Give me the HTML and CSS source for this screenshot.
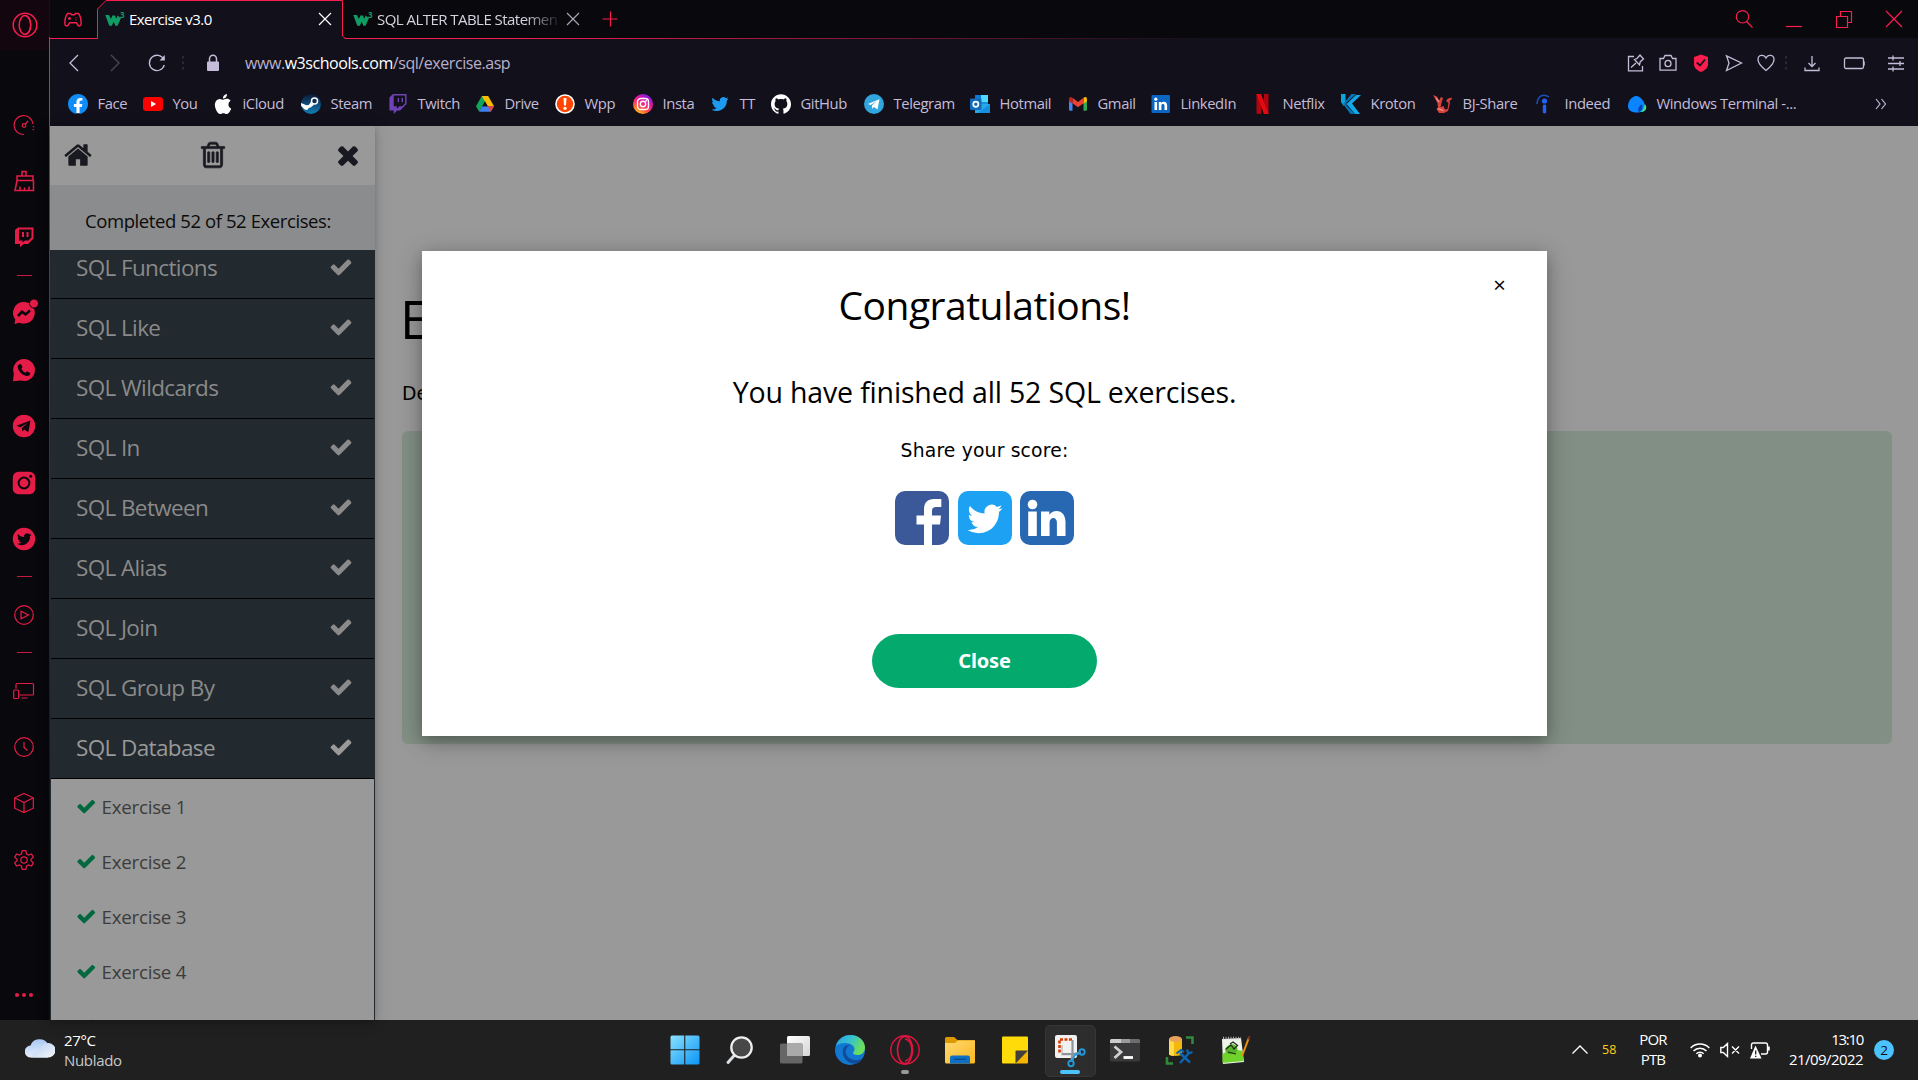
FILE: index.html
```html
<!DOCTYPE html>
<html lang="pt-BR">
<head>
<meta charset="utf-8">
<title>Exercise v3.0</title>
<link rel="stylesheet" href="styles.css">
</head>
<body>
<svg class="defs" aria-hidden="true">
  <symbol id="check" viewBox="0 0 1792 1792"><path d="M1671 566q0 40-28 68l-724 724-136 136q-28 28-68 28t-68-28l-136-136-362-362q-28-28-28-68t28-68l136-136q28-28 68-28t68 28l294 295 656-657q28-28 68-28t68 28l136 136q28 28 28 68z"/></symbol>
  <symbol id="bird" viewBox="0 0 24 24"><path d="M23.953 4.57a10 10 0 01-2.825.775 4.958 4.958 0 002.163-2.723c-.951.555-2.005.959-3.127 1.184a4.92 4.92 0 00-8.384 4.482C7.69 8.095 4.067 6.13 1.64 3.162a4.822 4.822 0 00-.666 2.475c0 1.71.87 3.213 2.188 4.096a4.904 4.904 0 01-2.228-.616v.06a4.923 4.923 0 003.946 4.827 4.996 4.996 0 01-2.212.085 4.936 4.936 0 004.604 3.417 9.867 9.867 0 01-6.102 2.105c-.39 0-.779-.023-1.17-.067a13.995 13.995 0 007.557 2.209c9.053 0 13.998-7.496 13.998-13.985 0-.21 0-.42-.015-.63A9.935 9.935 0 0024 4.59z"/></symbol>
  <symbol id="w3" viewBox="0 0 20 20"><path d="M.3 4.500h4.200l2 4.500 1.700-4h3l1.200 3.500 1.700-3.500 2.500 2.200 1.600-.4-4.200 9.600h-2.400l-2-4.500-2 4.500H4.800z" fill="#0f9d63"/></symbol>
  <symbol id="twitch" viewBox="0 0 24 24"><path d="M11.571 4.714h1.715v5.143H11.57zm4.715 0H18v5.143h-1.714zM6 0L1.714 4.286v15.428h5.143V24l4.286-4.286h3.428L22.286 12V0zm14.571 11.143l-3.428 3.428h-3.429l-3 3v-3H6.857V1.714h13.714Z"/></symbol>
  <symbol id="x" viewBox="0 0 14 14"><path d="M1 1l12 12M13 1L1 13" fill="none" stroke="currentColor" stroke-width="1.200"/></symbol>
</svg>

<div class="desktop">
<aside class="gxbar">
  <div class="gx-logo"><svg width="26" height="26" viewBox="0 0 26 26"><g fill="none" stroke="#fa1e4e"><circle cx="13" cy="13" r="11.800" stroke-width="1.500"/><ellipse cx="13" cy="13" rx="5.800" ry="9.500" stroke-width="1.500"/><path d="M11.500 22.500c9.500 1 9.500-20 0-19" stroke-width="1.300"/></g></svg></div>
  <div class="gx-item"><svg class="ln" viewBox="0 0 24 24"><path d="M12 21.500A9.500 9.500 0 1 1 21 11M21.500 13v1.200M21.200 16v1.200"/><circle cx="12" cy="12.500" r="1.800"/><path d="M13.500 11l2.500-3"/></svg></div>
  <div class="gx-item"><svg class="ln" viewBox="0 0 24 24"><path d="M10 7V2.500h4V7M5 7h16v4.500H5zM5 11.500L3 21.500h18.500v-10M8 21.500v-4M12.500 21.500v-3M17 21.500v-4" stroke-width="1.500"/></svg></div>
  <div class="gx-item"><svg class="fl" viewBox="0 0 24 24"><path fill-rule="evenodd" d="M3 5l3-2.500h15.500v11L16 19h-4l-4 3v-3H3zM7 4.500v11h3.500v2l2.500-2h3.500l3-3v-8zM10 7h2v5h-2zM14.500 7h2v5h-2z"/></svg></div>
  <i class="gx-sep"></i>
  <div class="gx-item"><svg class="fl" viewBox="0 0 24 24"><path d="M12 1a11 10.800 0 1 1-4.600 20.700L2.500 23l.8-4.600A10.800 10.800 0 0 1 12 1z"/><path d="M6 15l4-4.200 3.500 2.600L18 9.500" fill="none" stroke="#09080d" stroke-width="2.600"/><circle cx="22" cy="2.500" r="4.500" stroke="#09080d" stroke-width="1"/></svg></div>
  <div class="gx-item"><svg class="fl" viewBox="0 0 24 24"><path d="M12 1a11 11 0 1 1-3 21.600L1 23.200l.8-7.500A11 11 0 0 1 12 1z"/><path d="M7 6.500l2-.6 1.500 3.400-1.200 1.500c1 2 2.400 3.200 4.200 4l1.500-1.500 3.200 1.700c.2 2-1.700 3.300-3.600 2.900-4.300-.8-8-4.600-8.800-8.500-.2-1.200.2-2.300 1.200-2.900z" fill="#09080d"/></svg></div>
  <div class="gx-item"><svg class="fl" viewBox="0 0 24 24"><circle cx="12" cy="12" r="11.200"/><path d="M4.500 11.800L18.500 6.500l-2.200 11.800-4-2.800-2 1.900-.3-3.400 5.500-5-7 4.300z" fill="#09080d"/></svg></div>
  <div class="gx-item"><svg class="fl" viewBox="0 0 24 24"><rect x=".8" y=".8" width="22.400" height="22.400" rx="5.500"/><circle cx="12" cy="12" r="5.400" fill="none" stroke="#09080d" stroke-width="2"/><circle cx="18.700" cy="5.300" r="1.500" fill="#09080d"/></svg></div>
  <div class="gx-item"><svg class="fl" viewBox="0 0 24 24"><circle cx="12" cy="12" r="11.200"/><g fill="#09080d"><use href="#bird" x="5" y="5" width="14.500" height="14.500"/></g></svg></div>
  <i class="gx-sep"></i>
  <div class="gx-item"><svg class="ln" viewBox="0 0 24 24"><circle cx="12" cy="12" r="9.300"/><path d="M9 8.200v7.600l7.500-3.800z"/></svg></div>
  <i class="gx-sep"></i>
  <div class="gx-item"><svg class="ln" viewBox="0 0 24 24"><path d="M4 9.500V5.500q0-1 1-1h15.500q1 0 1 1V15q0 1-1 1H7.500M9.500 19h6"/><rect x="1.700" y="11" width="5" height="8.500" rx="1"/></svg></div>
  <div class="gx-item"><svg class="ln" viewBox="0 0 24 24"><circle cx="12" cy="12" r="9.300"/><path d="M12 7v5.500l3.500 3"/></svg></div>
  <div class="gx-item"><svg class="ln" viewBox="0 0 24 24"><path d="M12 2.500l9.300 4.300v10.400L12 21.500l-9.300-4.300V6.800zM2.700 6.800L12 11.500l9.300-4.700M12 11.500v10"/></svg></div>
  <div class="gx-item"><svg class="ln" viewBox="0 0 24 24"><circle cx="12" cy="12" r="3.200"/><path d="M10.200 2.700h3.600l.7 3.100 2 1.200 3-1 1.800 3.200-2.300 2v1.600l2.300 2-1.800 3.200-3-1-2 1.200-.7 3.100h-3.600l-.7-3.100-2-1.200-3 1-1.800-3.200 2.300-2v-1.600l-2.300-2L4.500 6l3 1 2-1.200z"/></svg></div>
  <div class="gx-item gx-more"><svg class="fl" viewBox="0 0 24 24"><circle cx="5" cy="12" r="2"/><circle cx="12" cy="12" r="2"/><circle cx="19" cy="12" r="2"/></svg></div>
</aside>

<section class="browser">
  <header class="tabs">
    <div class="tab-gx"><svg width="20" height="20" viewBox="0 0 20 20"><path d="M4.500 3.500h3l1.200 1.300h2.600l1.200-1.300h3c1.500 2 2.800 6 2.600 10.500-.1 2.300-2.300 2.500-3.300 1l-1.500-2.300H6.700L5.200 15c-1 1.500-3.200 1.300-3.300-1C1.700 9.500 3 5.500 4.500 3.500zM6.500 7v3M5 8.500h3M13 7.500v.8M13 9.500v.8" fill="none" stroke="#fa1e4e" stroke-width="1.400"/></svg></div>
    <div class="tab tab-on">
      <svg class="tab-frame" width="250" height="39" viewBox="0 0 250 39"><path d="M0 39l.5-1V9L9 .5h236.500V36l2.500 3z" fill="#12101a"/><path d="M0 38.500h.5V9L9 .5h236.500v35.500l3 2.500h2" fill="none" stroke="#fa1e4e"/></svg>
      <svg class="fav" viewBox="0 0 20 20"><use href="#w3"/></svg><sup>3</sup><span class="tab-t">Exercise v3.0</span>
      <svg class="tab-x" viewBox="0 0 14 14"><use href="#x"/></svg>
    </div>
    <div class="tab tab-off">
      <svg class="fav" viewBox="0 0 20 20"><use href="#w3"/></svg><sup>3</sup><span class="tab-t">SQL ALTER TABLE Statemen</span>
      <svg class="tab-x" viewBox="0 0 14 14"><use href="#x"/></svg>
    </div>
    <svg class="plus" width="16" height="16" viewBox="0 0 16 16"><path d="M8.500 .5v15M.5 8h15" stroke="#fa1e4e" stroke-width="1.200"/></svg>
    <div class="winbtns">
      <svg width="20" height="20" viewBox="0 0 20 20"><circle cx="8.500" cy="7.800" r="6.200"/><path d="M12.500 12.500l6 6"/></svg>
      <svg width="20" height="20" viewBox="0 0 20 20"><path d="M2 17.500h16"/></svg>
      <svg width="20" height="20" viewBox="0 0 20 20"><path d="M2.500 7.500h11v11h-11zM6.500 7V2.500h11v11H14"/></svg>
      <svg width="20" height="20" viewBox="0 0 20 20"><path d="M2 2l16 16M18 2L2 18"/></svg>
    </div>
  </header>

  <div class="address">
    <div class="nav">
      <svg width="20" height="20" viewBox="0 0 20 20"><path d="M14 2L6 10l8 8"/></svg>
      <svg class="dim" width="20" height="20" viewBox="0 0 20 20"><path d="M6 2l8 8-8 8"/></svg>
      <svg width="20" height="20" viewBox="0 0 20 20"><path d="M16.800 6.500A7.600 7.600 0 1 0 17.300 12"/><path d="M17.800 2v5.500h-5.300z" fill="#c4bcd8" stroke="none"/></svg>
      <svg class="dots" width="4" height="16" viewBox="0 0 4 16"><path d="M2 1v14" stroke-width="2" stroke-dasharray="2.500 3"/></svg>
      <svg width="14" height="18" viewBox="0 0 14 18"><path d="M3.500 8V5a3.500 3.700 0 0 1 7 0v3" stroke-width="1.500"/><rect x="1" y="7.500" width="12" height="9.500" rx="1" fill="#c4bcd8" stroke="none"/></svg>
    </div>
    <div class="url">www.<b>w3schools.com</b>/sql/exercise.asp</div>
    <div class="tools">
      <svg width="20" height="20" viewBox="0 0 20 20"><path d="M8 3.500H2.500v14.300h14V13M5 14.500l5-4.500M8.500 6.500l5 5.500.8-3.300 3.200-2.700-3.500-4-3 3.500z"/></svg>
      <svg width="20" height="20" viewBox="0 0 20 20"><path d="M2 5.500h3.500l1.500-3h6l1.500 3H18v11.700H2z"/><ellipse cx="10" cy="10.500" rx="3" ry="3.200"/></svg>
      <svg width="20" height="20" viewBox="0 0 20 20"><path d="M10 1.500l7 2.500v7.500c0 3.500-4 6.500-7 7.500-3-1-7-4-7-7.500V4z" fill="#fa1e4e" stroke="none"/><path d="M5.800 9.500l3.200 3 5-6" stroke="#12101a" stroke-width="1.800"/></svg>
      <svg width="20" height="20" viewBox="0 0 20 20"><path d="M2.500 2.800L17.500 10l-15 7.500L5 10z"/></svg>
      <svg width="20" height="20" viewBox="0 0 20 20"><path d="M10 17.500C5 13.500 2 10.500 2 6.500c0-5 6-5.500 8-1.500 2-4 8-3.500 8 1.500 0 4-3 7-8 11z"/></svg>
      <svg class="dots" width="4" height="16" viewBox="0 0 4 16"><path d="M2 1v14" stroke-width="2" stroke-dasharray="2.500 3"/></svg>
      <svg width="20" height="20" viewBox="0 0 20 20"><path d="M10 3v10M6.500 10l3.500 3.500 3.500-3.500M3 14.500v3h14v-3"/></svg>
      <svg width="24" height="20" viewBox="0 0 24 20"><rect x="2.500" y="5" width="19" height="10.500" rx="1.500"/><path d="M22 8.500v4" stroke-width="1.500"/></svg>
      <svg width="20" height="20" viewBox="0 0 20 20"><path d="M2 5h16M2 10.500h16M2 16h16M7 2.500v5M14 8v5M7 13.500v5"/></svg>
    </div>
  </div>

  <nav class="marks">
    <a><svg viewBox="0 0 24 24"><circle cx="12" cy="12" r="11" fill="#fff"/><path fill="#0f8cf5" d="M24 12.073c0-6.627-5.373-12-12-12s-12 5.373-12 12c0 5.990 4.388 10.954 10.125 11.854v-8.385H7.078v-3.470h3.047V9.430c0-3.007 1.792-4.669 4.533-4.669 1.312 0 2.686.235 2.686.235v2.953H15.830c-1.491 0-1.956.925-1.956 1.874v2.250h3.328l-.532 3.470h-2.796v8.385C19.612 23.027 24 18.062 24 12.073z"/></svg>Face</a>
    <a><svg viewBox="0 0 20 20"><rect y="3" width="20" height="14" rx="3.200" fill="#f00"/><path d="M8 7l5.200 3L8 13z" fill="#fff"/></svg>You</a>
    <a><svg viewBox="0 0 24 24"><path fill="#fff" d="M12.152 6.896c-.948 0-2.415-1.078-3.960-1.040-2.040.027-3.910 1.183-4.961 3.014-2.117 3.675-.546 9.103 1.519 12.090 1.013 1.454 2.208 3.090 3.792 3.039 1.520-.065 2.090-.987 3.935-.987 1.831 0 2.350.987 3.960.948 1.637-.026 2.676-1.480 3.676-2.948 1.156-1.688 1.636-3.325 1.662-3.415-.039-.013-3.182-1.221-3.220-4.857-.026-3.040 2.480-4.494 2.597-4.559-1.429-2.090-3.623-2.324-4.390-2.376-2-.156-3.675 1.090-4.610 1.090zM15.530 3.830c.843-1.012 1.400-2.427 1.245-3.830-1.207.052-2.662.805-3.532 1.818-.78.896-1.454 2.338-1.273 3.714 1.338.104 2.715-.688 3.559-1.701"/></svg>iCloud</a>
    <a><svg viewBox="0 0 20 20"><linearGradient id="st" x2="0" y2="1"><stop stop-color="#0b1838"/><stop offset="1" stop-color="#1280b8"/></linearGradient><circle cx="10" cy="10" r="10" fill="url(#st)"/><path d="M0 9l5.500 2.300 2.200-.2L10.300 7.500 11 12l-2.800 1.500-2 2.500-2.500-.5L.2 12z" fill="#fff"/><circle cx="13.500" cy="7" r="3" fill="#0f2a50" stroke="#fff" stroke-width="1.500"/><path d="M8 13l4-3" stroke="#fff" stroke-width="2.500"/></svg>Steam</a>
    <a><svg viewBox="0 0 24 24" fill="#6f42b5"><use href="#twitch"/></svg>Twitch</a>
    <a><svg viewBox="0 0 20 20"><path d="M6.800 2h6.400L10 7.600 4.200 17.800 1 12.200z" fill="#10a65a"/><path d="M6.800 2h6.400L19 12.200h-6.300z" fill="#fbbc04"/><path d="M7.200 12.200H19l-3.200 5.600H4.200z" fill="#3f7ff0"/><path d="M19 12.200h-6.300l3.100 5.600z" fill="#ea4335"/><path d="M10 7.600l2.700 4.600H7.300z" fill="#12101a"/></svg>Drive</a>
    <a><svg viewBox="0 0 20 20"><circle cx="10" cy="10" r="9" fill="#ff4500" stroke="#fff" stroke-width="1.600"/><path d="M8.500 4h3l-.5 7.500H9z" fill="#fff"/><circle cx="10" cy="14.300" r="1.600" fill="#fff"/></svg>Wpp</a>
    <a><svg viewBox="0 0 20 20"><linearGradient id="ig" x1="0.200" y1="1" x2=".8" y2="0"><stop stop-color="#fd1"/><stop offset=".3" stop-color="#ff543e"/><stop offset=".6" stop-color="#f0149a"/><stop offset="1" stop-color="#6a1df0"/></linearGradient><circle cx="10" cy="10" r="10" fill="url(#ig)"/><g fill="none" stroke="#fff" stroke-width="1.400"><rect x="4.500" y="4.500" width="11" height="11" rx="3.300"/><circle cx="10" cy="10" r="2.700"/></g><circle cx="13.200" cy="6.800" r=".9" fill="#fff"/></svg>Insta</a>
    <a><svg viewBox="-2 -2 28 28" fill="#1d9bf0"><use href="#bird" width="24" height="24"/></svg>TT</a>
    <a><svg viewBox="0 0 24 24"><path fill="#fff" d="M12 .297c-6.630 0-12 5.373-12 12 0 5.303 3.438 9.800 8.205 11.385.6.113.82-.258.82-.577 0-.285-.01-1.040-.015-2.040-3.338.724-4.042-1.610-4.042-1.610C4.422 18.070 3.633 17.700 3.633 17.700c-1.087-.744.084-.729.084-.729 1.205.084 1.838 1.236 1.838 1.236 1.070 1.835 2.809 1.305 3.495.998.108-.776.417-1.305.76-1.605-2.665-.3-5.466-1.332-5.466-5.930 0-1.310.465-2.380 1.235-3.220-.135-.303-.54-1.523.105-3.176 0 0 1.005-.322 3.300 1.230.96-.267 1.980-.399 3-.405 1.020.006 2.040.138 3 .405 2.280-1.552 3.285-1.230 3.285-1.230.645 1.653.24 2.873.12 3.176.765.840 1.230 1.910 1.230 3.220 0 4.610-2.805 5.625-5.475 5.920.42.36.81 1.096.81 2.220 0 1.606-.015 2.896-.015 3.286 0 .315.21.69.825.57C20.565 22.092 24 17.592 24 12.297c0-6.627-5.373-12-12-12"/></svg>GitHub</a>
    <a><svg viewBox="0 0 20 20"><circle cx="10" cy="10" r="10" fill="#31a5de"/><path d="M3.800 10L15.500 5.300l-2 10.200-3.500-2.500-1.800 1.700-.3-3.100 4.900-4.400-6.200 3.800z" fill="#fff"/></svg>Telegram</a>
    <a><svg viewBox="0 0 20 20"><path d="M5 1h13v17H5z" fill="#1490df"/><path d="M11 1h7v7h-7z" fill="#50d9ff"/><path d="M5 1h6v7H5z" fill="#0f78d4"/><path d="M5 10l15 0v9H5z" fill="#28a8ea"/><path d="M20 10v9H8z" fill="#1490df"/><rect y="4.500" width="11.500" height="11.500" rx="1" fill="#0f6cbd"/><circle cx="5.800" cy="10.200" r="2.600" fill="none" stroke="#fff" stroke-width="1.700"/></svg>Hotmail</a>
    <a><svg viewBox="0 0 20 20"><path d="M1 5.500l3.500 2v9.300H2.300Q1 16.800 1 15.500z" fill="#4285f4"/><path d="M15.500 7.500l3.500-2v10q0 1.300-1.300 1.300h-2.200z" fill="#34a853"/><path d="M15.500 3.800q3.500-2 3.500 1.700v1.700l-3.500 2.600z" fill="#fbbc04"/><path d="M4.500 3.800L10 8l5.500-4.200v5.400L10 13.300 4.500 9.200z" fill="#ea4335"/><path d="M4.500 3.800Q1 1.800 1 5.500v1.700l3.500 2.600z" fill="#c5221f"/></svg>Gmail</a>
    <a><svg viewBox="0 0 20 20"><rect x=".5" y="1" width="18.500" height="18" rx="1.200" fill="#0a66c2"/><path d="M3.500 8h2.600v8H3.500zM7.800 8h2.500v1.100c1.500-2.200 5.800-1.600 5.800 2.100V16h-2.600v-4.300c0-2.200-3.100-2.100-3.100 0V16H7.800z" fill="#fff"/><circle cx="4.800" cy="5.200" r="1.600" fill="#fff"/></svg>LinkedIn</a>
    <a><svg viewBox="0 0 20 20"><path d="M3.500 0H8v20l-4.500-.3zM11 0h4.500v19.700L11 20z" fill="#b1060f"/><path d="M3.500 0H8l7.500 20H11z" fill="#e50914"/></svg>Netflix</a>
    <a><svg viewBox="0 0 20 20"><path d="M0 0h4.500v9L2.500 12 0 8z" fill="#0aa5dd"/><path d="M15 1h5l-9 8.500L19 20h-5L5.500 10z" fill="#12a8e8"/><path d="M10.500 0H15l-9.500 8.500v3L14 20H9.500L2 10z" fill="#0675b5"/></svg>Kroton</a>
    <a><svg viewBox="0 0 20 20"><path d="M0 1l4 1.500 2 4 2-3.500 2 1-1.500 5L7.500 13l3-1 1.500 3.500 2.500-.5 1-6-2.500-2 2-2.500 4-1-.5 2-2 1.500.5 2-2 8-4 2H6l-2.500-4 1.500-1L4.500 9z" fill="#d9423c"/><path d="M4.500 14.500l6 2M3 4l3 4" stroke="#f0a09a" stroke-width="1.200"/></svg>BJ-Share</a>
    <a><svg viewBox="0 0 20 20"><circle cx="9.500" cy="7" r="2.600" fill="#2164f3"/><rect x="7.800" y="10.500" width="3.400" height="9" rx="1.400" fill="#2164f3"/><path d="M2 10C2.500 1.500 8.500-.8 14 3" fill="none" stroke="#1c4fc0" stroke-width="1.500"/></svg>Indeed</a>
    <a><svg viewBox="0 0 20 20"><path d="M10 2c4 1 8 6 8 11 0 3.500-3 5.500-8.500 5.500S1 16 1 12C1 7 5 1.500 10 2z" fill="#0a84ff"/><path d="M13 18c4-1 3.500-6 5-8 3 4 .5 8.500-5 8z" fill="#3be08a"/><path d="M12 18c-2-2 0-6 2.500-7.500 2 2 1 6-2.500 7.500z" fill="#0b3fb5"/></svg>Windows Terminal -...</a>
    <svg class="more" width="12" height="12" viewBox="0 0 12 12"><path d="M1 1l4 5-4 5M6.500 1l4 5-4 5" fill="none" stroke="#c4bcd8" stroke-width="1.200"/></svg>
  </nav>

  <main class="page">
    <aside class="side">
      <div class="side-head">
        <svg viewBox="0 0 1792 1792"><path d="M1472 992v480q0 26-19 45t-45 19h-384v-384h-256v384h-384q-26 0-45-19t-19-45v-480q0-1 .5-3t.5-3l575-474 575 474q1 2 1 6zm223-69l-62 74q-8 9-21 11h-3q-13 0-21-7l-692-577-692 577q-12 8-24 7-13-2-21-11l-62-74q-8-10-7-23.500t11-21.500l719-599q32-26 76-26t76 26l244 204v-195q0-14 9-23t23-9h192q14 0 23 9t9 23v408l219 182q10 8 11 21.500t-7 23.500z"/></svg>
        <svg viewBox="0 0 1792 1792"><path stroke="#191a21" stroke-width="40" d="M704 736v576q0 14-9 23t-23 9h-64q-14 0-23-9t-9-23v-576q0-14 9-23t23-9h64q14 0 23 9t9 23zm256 0v576q0 14-9 23t-23 9h-64q-14 0-23-9t-9-23v-576q0-14 9-23t23-9h64q14 0 23 9t9 23zm256 0v576q0 14-9 23t-23 9h-64q-14 0-23-9t-9-23v-576q0-14 9-23t23-9h64q14 0 23 9t9 23zm128 724v-948h-896v948q0 22 7 40.500t14.500 27 10.500 8.500h832q3 0 10.500-8.500t14.500-27 7-40.500zm-672-1076h448l-48-117q-7-9-17-11h-317q-10 2-17 11zm928 32v64q0 14-9 23t-23 9h-96v948q0 83-47 143.500t-113 60.500h-832q-66 0-113-58.500t-47-141.500v-952h-96q-14 0-23-9t-9-23v-64q0-14 9-23t23-9h309l70-167q15-37 54-63t79-26h320q40 0 79 26t54 63l70 167h309q14 0 23 9t9 23z"/></svg>
        <svg viewBox="0 0 1792 1792"><path d="M1490 1322q0 40-28 68l-136 136q-28 28-68 28t-68-28l-294-294-294 294q-28 28-68 28t-68-28l-136-136q-28-28-28-68t28-68l294-294-294-294q-28-28-28-68t28-68l136-136q28-28 68-28t68 28l294 294 294-294q28-28 68-28t68 28l136 136q28 28 28 68t-28 68l-294 294 294 294q28 28 28 68z"/></svg>
      </div>
      <div class="side-done">Completed 52 of 52 Exercises:</div>
      <div class="list"><div class="list-in">
        <div class="topic">SQL Functions<svg><use href="#check"/></svg></div>
        <div class="topic">SQL Like<svg><use href="#check"/></svg></div>
        <div class="topic">SQL Wildcards<svg><use href="#check"/></svg></div>
        <div class="topic">SQL In<svg><use href="#check"/></svg></div>
        <div class="topic">SQL Between<svg><use href="#check"/></svg></div>
        <div class="topic">SQL Alias<svg><use href="#check"/></svg></div>
        <div class="topic">SQL Join<svg><use href="#check"/></svg></div>
        <div class="topic">SQL Group By<svg><use href="#check"/></svg></div>
        <div class="topic open">SQL Database<svg><use href="#check"/></svg></div>
        <div class="exs">
          <div class="ex"><svg><use href="#check"/></svg>Exercise 1</div>
          <div class="ex"><svg><use href="#check"/></svg>Exercise 2</div>
          <div class="ex"><svg><use href="#check"/></svg>Exercise 3</div>
          <div class="ex"><svg><use href="#check"/></svg>Exercise 4</div>
          <div class="ex"><svg><use href="#check"/></svg>Exercise 5</div>
        </div>
      </div></div>
    </aside>
    <article class="content">
      <h1>Exercise:</h1>
      <p>Delete the database:</p>
      <div class="panel"></div>
    </article>
    <div class="modal">
      <span class="modal-x">×</span>
      <h2>Congratulations!</h2>
      <p class="fin">You have finished all 52 SQL exercises.</p>
      <p class="share">Share your score:</p>
      <div class="socials">
        <svg viewBox="0 0 54 54"><rect width="54" height="54" rx="10" fill="#3b5998"/><path d="M29 54V33.500h-7.500v-9H29v-6C29 11.500 32.500 8 39 8h7.300v8H41c-2.800 0-4 1.300-4 4v4.500h9l-1 9h-8V54z" fill="#fff"/></svg>
        <svg viewBox="0 0 54 54"><rect width="54" height="54" rx="10" fill="#1da1f2"/><g fill="#fff"><use href="#bird" x="9.500" y="10" width="35" height="36"/></g></svg>
        <svg viewBox="0 0 54 54"><rect width="54" height="54" rx="10" fill="#2867b2"/><circle cx="12.500" cy="13.500" r="4.800" fill="#fff"/><path d="M8.200 20.500h8.600V45H8.200zM21 20.500h8.300v3.200c3.700-6 16.200-5.700 16.200 7.100V45h-8.600V31.500c0-6.300-7.300-6-7.300 0V45H21z" fill="#fff"/></svg>
      </div>
      <button class="close">Close</button>
    </div>
  </main>
</section>

<footer class="taskbar">
  <div class="weather">
    <svg width="30" height="20" viewBox="0 0 30 20"><linearGradient id="c1" x2="0" y2="1"><stop stop-color="#a9c8f5"/><stop offset="1" stop-color="#e6eefa"/></linearGradient><linearGradient id="c2" x2="1" y2="1"><stop stop-color="#b4cdf2"/><stop offset="1" stop-color="#f4f6fa"/></linearGradient><path d="M6 19.500a6 6 0 0 1-.5-12A9.500 9 0 0 1 23 6v13.500z" fill="url(#c1)"/><path d="M6 19.500c4-9 9-4 10-8a7.300 7.300 0 1 1 7 8z" fill="url(#c2)"/></svg>
    <div>27°C<br><span>Nublado</span></div>
  </div>
  <div class="apps">
    <div><svg viewBox="0 0 30 30"><linearGradient id="wn" x2="1" y2="1"><stop stop-color="#8be2ff"/><stop offset="1" stop-color="#0a94f5"/></linearGradient><path d="M.5 2q0-1.500 1.500-1.500h12.200v13.700H.5zM15.300.5H28q1.500 0 1.500 1.500v12.200H15.300zM.5 15.300h13.700v14.200H2Q.5 29.500.5 28zM15.300 15.300h14.200V28q0 1.500-1.500 1.500H15.300z" fill="url(#wn)"/></svg></div>
    <div><svg viewBox="0 0 30 30"><path d="M10.500 19l-7.500 8.500" stroke="#dcdfe2" stroke-width="3" stroke-linecap="round"/><circle cx="16.500" cy="12.500" r="10.200" fill="#484848" stroke="#eceef0" stroke-width="2.300"/></svg></div>
    <div><svg viewBox="0 0 30 30"><linearGradient id="tv" x2="1" y2="1"><stop stop-color="#fff"/><stop offset="1" stop-color="#d5d5d5"/></linearGradient><rect x="7" y="1" width="23" height="20" rx="1.500" fill="url(#tv)"/><rect y="8.500" width="22.500" height="20" rx="1.500" fill="#666"/><rect x="7" y="8.500" width="15.500" height="12.500" fill="#aaa"/></svg></div>
    <div><svg viewBox="0 0 30 30"><linearGradient id="e1" x2="1" y2=".4"><stop stop-color="#2a9fe0"/><stop offset=".5" stop-color="#35c1d0"/><stop offset="1" stop-color="#6be05a"/></linearGradient><circle cx="15" cy="15" r="15" fill="#1277d0"/><path d="M1 11C3 4 8.500 0 15.500 0 24 0 30 6 30 12.500c0 5-3.500 7.500-7.500 7.500-3 0-4.500-1-4.500-2s1.500-1.500 1.500-4c0-3-4-6-9-6-4 0-7.500 1-9.500 3z" fill="url(#e1)"/><path d="M10.500 17c0-3.500 2-6 5-7-8-1-9 7-6.500 12 2.500 5 8.500 7.500 13 6.500 3.500-1.500 5-3.500 5.500-5-7 4-16 .5-17-6.500z" fill="#114a98"/></svg></div>
    <div class="run"><svg viewBox="0 0 30 30"><g fill="none" stroke="#e0143f" stroke-width="1.400"><circle cx="15" cy="15" r="14.200"/><ellipse cx="15" cy="15" rx="7.500" ry="13.500" stroke-width="1.700"/><path d="M15 4c9 1 9 21 0 22" stroke-width="1.300"/></g></svg></div>
    <div><svg viewBox="0 0 30 30"><linearGradient id="fo" x2="1" y2="1"><stop stop-color="#ffd873"/><stop offset="1" stop-color="#fbb91c"/></linearGradient><path d="M0 8V3.500Q0 2 1.500 2H9l3.500 3H29q1 0 1 1.200V12H0z" fill="#dd9a00"/><path d="M0 8h10l3-2.500h17V27q0 1.500-1.500 1.500h-27Q0 28.500 0 27z" fill="url(#fo)"/><path d="M5 28.500v-6q0-2 2-2h16q2 0 2 2v6z" fill="#0f6fc5"/><path d="M9 24.300h12" stroke="#0a4b8c" stroke-width="1.300"/></svg></div>
    <div><svg viewBox="0 0 30 30"><path d="M3 1.500h24q1 0 1 1V16l-12 12.500H3q-1 0-1-1v-25q0-1 1-1z" fill="#ffdb0a"/><path d="M28 15.500L15.500 28.500H27q1 0 1-1z" fill="#f5b400"/><path d="M15.500 28.500V16.500q0-1 1-1H28z" fill="#43403a"/></svg></div>
    <div class="active"><svg viewBox="0 0 30 30"><rect width="22" height="23" rx="2" fill="#f1f1f1"/><path d="M4.500 17.500V4.500h13" fill="none" stroke="#d83b01" stroke-width="2.600" stroke-dasharray="3 1.500"/><path d="M7 10v9.500h9" fill="none" stroke="#c9ccd0" stroke-width="2"/><path d="M17.500 5v14l-1 6M7 19h11l8-1.500" fill="none" stroke="#8c949c" stroke-width="2.200"/><g fill="none" stroke="#2197dc" stroke-width="1.900"><circle cx="27" cy="17" r="2.700"/><circle cx="16" cy="28.500" r="2.700"/><path d="M24.500 18.500l-5 1.500-2 6"/></g></svg></div>
    <div><svg viewBox="0 0 30 30"><rect y="4" width="30" height="22.500" rx="1.500" fill="#3a3a3c"/><path d="M0 8V5.500Q0 4 1.500 4H11v4z" fill="#ccc"/><path d="M11 4h9v4h-9z" fill="#9b9b9b"/><path d="M20 4h8.500Q30 4 30 5.500V8H20z" fill="#6d6d6d"/><path d="M4.500 11.500L11 17l-6.500 6" fill="none" stroke="#d0d0d0" stroke-width="2.800"/><path d="M13.500 22.500H23" stroke="#fff" stroke-width="2.800"/></svg></div>
    <div><svg viewBox="0 0 30 30"><path d="M4 4v15c0 2.500 13 2.500 13 0V4z" fill="#f2b90c"/><path d="M4 4h5v17c-3-.3-5-1-5-2z" fill="#ffdb4a"/><ellipse cx="10.500" cy="4" rx="6.500" ry="3" fill="#eaa25a"/><path d="M21 2.500h6.500V9M2 22v6.500h6" fill="none" stroke="#2f8a3a" stroke-width="2.600"/><path d="M15 28l9-10M15 18l10 9.500" stroke="#0e64b0" stroke-width="2.500"/><path d="M11.500 18.500l4.500-3.500 3 2M22 14.500l1.500 4 4-1.500" stroke="#0e64b0" stroke-width="2.200" fill="none"/></svg></div>
    <div><svg viewBox="0 0 30 30"><path d="M2 4l19-1 3 24-21 2z" fill="#eef3ea"/><path d="M2.500 19q10-6 20-3l1 10-21 2z" fill="#6fd32c"/><path d="M5 14c3-5 8-6 11-3s1 7-3 8-8-1-8-5z" fill="#58b428"/><path d="M6 14l5-4 3 4 4-4M8 17l8 2M10 9l3-2 4 3" stroke="#1d2a18" stroke-width="1.200" fill="none"/><path d="M3 3h18" stroke="#aaa" stroke-width="2.500" stroke-dasharray="1 1.500"/><path d="M29 2.500L22 21" stroke="#e9940f" stroke-width="2"/><path d="M28.500 4.500l1-3.500" stroke="#7a3020" stroke-width="2"/></svg></div>
  </div>
  <div class="tray">
    <svg width="16" height="12" viewBox="0 0 16 12"><path d="M.5 9.500L8 2l7.500 7.500" fill="none" stroke="#fff" stroke-width="1.300"/></svg>
    <span class="temp">58</span>
    <span class="lang">POR<br>PTB</span>
    <svg width="20" height="16" viewBox="0 0 20 16"><g fill="none" stroke="#fff" stroke-width="1.500"><path d="M.7 6a13 13 0 0 1 18.600 0M3.500 9a9 9 0 0 1 13 0M6.300 11.700a5.200 5.200 0 0 1 7.400 0"/></g><circle cx="10" cy="13.500" r="2" fill="#fff"/></svg>
    <svg width="20" height="16" viewBox="0 0 20 16"><path d="M.8 5.500h2.500L7.500 1.500v13l-4.200-4H.8zM12 4.500l7 7M19 4.500l-7 7" fill="none" stroke="#fff" stroke-width="1.400"/></svg>
    <svg width="20" height="18" viewBox="0 0 20 18"><path d="M1.500 8V4q0-2 2-2h12q2 0 2 2v7q0 2-2 2H11" fill="none" stroke="#fff" stroke-width="1.400"/><path d="M18.500 5.500v4" stroke="#fff" stroke-width="2.500"/><path d="M5.500 4.500l6 13H0z" fill="#fff"/><path d="M5.700 9.500v4M5.700 14.700v1.300" stroke="#202020" stroke-width="1.300"/></svg>
    <span class="clock"><span class="time">13:10</span><br>21/09/2022</span>
    <span class="badge">2</span>
  </div>
</footer>
</div>
</body>
</html>
```

FILE: styles.css
```css
* { box-sizing: border-box; }
body, h1, h2, p { margin: 0; }
body {
  width: 1918px; height: 1080px; overflow: hidden; background: #09080d;
  font-family: "Open Sans", "Noto Sans", sans-serif;
}
svg { display: block; flex: none; }
.defs { position: absolute; width: 0; height: 0; }
.desktop { display: grid; grid-template: 1020px 60px / 49px 1fr; width: 1918px; height: 1080px; }

/* Browser side bar */
.gxbar { display: flex; flex-direction: column; height: 1020px; background: #09080d; }
.gx-logo { height: 50px; margin-bottom: 46.5px; padding-left: 12px; display: flex; align-items: center; background: #13060f; }
.gx-item { height: 56.4px; flex: none; display: flex; align-items: center; padding-left: 12px; }
.gx-item svg { width: 24px; height: 24px; overflow: visible; }
.ln { fill: none; stroke: #e61c48; stroke-width: 1.2; }
.fl { fill: #e61c48; }
.gx-sep { height: 19.5px; flex: none; display: flex; align-items: center; }
.gx-sep::before { content: ""; width: 15px; height: 1px; margin-left: 17px; background: #c5193f; }
.gx-more { margin-top: auto; margin-bottom: -3px; }

.browser { display: flex; flex-direction: column; height: 1020px; min-width: 0; border-left: 1px solid; border-image: linear-gradient(#0000 38px, #fa1e4e 38px, #b81a40 300px, #7a1530 550px, #12101a 850px) 1; background: #12101a; }

/* Tabs */
.tabs { height: 39px; display: flex; align-items: center; background: linear-gradient(90deg, #fa1e4e 300px, #fa1e4e 450px, #12101a 1150px) bottom / 100% 1px no-repeat #09080d; color: #fff; font-size: 15px; }
.tab-gx { width: 47px; padding-left: 13px; height: 39px; display: flex; align-items: center; }
.tab { position: relative; display: flex; align-items: center; height: 39px; flex: none; }
.tab-on { width: 248px; padding-left: 8px; }
.tab-off { width: 240px; padding-left: 8px; color: #d6d3de; }
.tab > * { position: relative; }
.tab .tab-frame { position: absolute; left: 0; top: 0; }
.fav { width: 18px; height: 20px; }
.tab sup { width: 6px; margin-left: -3px; font-size: 8px; line-height: 8px; font-weight: 700; color: #0f9d63; align-self: flex-start; margin-top: 11px; }
.tab-t { width: 183px; margin-left: 3px; letter-spacing: -.54px; white-space: nowrap; line-height: 36px; margin-top: -1px; }
.tab-off .tab-t { width: 180px; -webkit-mask: linear-gradient(90deg, #000 82%, #0002 100%); mask: linear-gradient(90deg, #000 82%, #0002 100%); }
.tab-x { width: 14px; height: 14px; margin-left: 6px; margin-top: -1px; }
.tab-off .tab-x { margin-left: 9px; color: #a8a5b0; }
.plus { margin-left: 17px; margin-top: -2px; }
.winbtns { margin-left: auto; display: flex; gap: 30px; padding-right: 14px; fill: none; stroke: #fa1e4e; stroke-width: 1.2; margin-top: -2px; }

/* Address row */
.address { height: 48px; display: flex; align-items: center; }
.address svg { fill: none; stroke: #c4bcd8; stroke-width: 1.3; }
.nav { width: 195px; display: grid; grid-template-columns: 41px 42px 34px 25px 20px; padding-left: 14px; align-items: center; }
.address .dim { stroke: #4c4858; }
.address .dots { stroke: #2c2938; }
.url { font-size: 16px; letter-spacing: -.44px; color: #b9b1cc; margin-top: -1px; }
.url b { font-weight: 400; color: #fff; }
.tools { margin: -1px 0 0 auto; display: grid; grid-template-columns: 32px 32px 34px 32px 32px 8px 44px 40px 44px; justify-items: center; align-items: center; }

/* Bookmarks */
.marks { height: 39px; flex: none; padding: 0 0 6px 18px; display: grid; align-items: center; grid-template-columns: 75px 70px 88px 87px 87px 80px 78px 77px 61px 93px 106px 98px 83px 102px 88px 92px 102px 92px 248px auto; color: #c4bcd8; font-size: 14.8px; letter-spacing: -.4px; }
.marks a { display: flex; align-items: center; gap: 9.5px; white-space: nowrap; line-height: 20px; margin-top: -1px; }
.marks a svg { width: 20px; height: 20px; margin-top: 1px; }

/* Page */
.page { position: relative; flex: 1; min-height: 0; display: flex; background: #999; }
.side { position: relative; width: 325px; flex: none; display: flex; flex-direction: column; box-shadow: 0 2px 6px rgba(0,0,0,.16), 0 2px 16px rgba(0,0,0,.16); }
.side-head { height: 59px; flex: none; display: flex; justify-content: space-between; align-items: center; padding: 0 12px 2px 13px; background: #999; fill: #191a21; }
.side-head svg { width: 30px; height: 30px; }
.side-done { height: 65px; flex: none; line-height: 72px; padding-left: 35px; background: #8b8c8d; font-size: 18.5px; letter-spacing: -.41px; color: #0b0b0b; }
.list { flex: 1; min-height: 0; overflow: hidden; background: #22292f; }
.list-in { margin-top: -11px; }
.topic { height: 60px; display: flex; align-items: center; justify-content: space-between; margin: 0 1px; padding: 0 21px 2px 25px; border-bottom: 1px solid #000; color: #8a8a8a; fill: #8a8a8a; font-size: 22.5px; letter-spacing: -.62px; }
.topic svg { width: 24px; height: 24px; margin-top: -1px; }
.open { color: #999; fill: #999; }
.exs { margin: 0 1px; background: #999; }
.ex { height: 55px; display: flex; align-items: center; gap: 5px; padding-left: 25px; font-size: 18.75px; letter-spacing: -.25px; color: #3c3c3c; fill: #02683f; }
.ex svg { width: 20.5px; height: 20.5px; }
.content { flex: 1; padding: 155px 26px 0 27px; color: #000; }
.content h1 { font-size: 52.5px; font-weight: 400; line-height: 76px; margin-left: -2px; }
.content p { font: 18.75px/30px "DejaVu Sans", sans-serif; margin-top: 22px; }
.panel { height: 313px; margin-top: 22px; border-radius: 6px; background: #828f85; }

/* Dialog */
.modal { position: absolute; left: 372px; top: 125px; width: 1125px; height: 485px; padding-top: 29px; background: #fff; color: #000; text-align: center; box-shadow: 0 5px 12px rgba(0,0,0,.2), 0 5px 25px rgba(0,0,0,.24); }
.modal-x { position: absolute; right: 40px; top: 19px; font-size: 22px; line-height: 28px; width: 15px; }
.modal h2 { font-size: 39px; line-height: 50px; font-weight: 400; letter-spacing: -.5px; }
.fin { font-size: 28.5px; line-height: 40px; margin-top: 42px; letter-spacing: -.17px; }
.share { font: 18.75px/30px "DejaVu Sans", sans-serif; letter-spacing: .17px; margin-top: 24px; }
.socials { display: flex; justify-content: center; gap: 8.6px; margin-top: 25px; }
.socials svg { width: 54px; height: 54px; }
.close { display: block; width: 225px; height: 54px; margin: 89px auto 0; border: 0; border-radius: 27px; background: #04aa6d; color: #fff; font: 700 20px "Noto Sans", sans-serif; letter-spacing: -.2px; padding: 0 0 2px; }

/* Taskbar */
.taskbar { grid-column: 1 / -1; display: grid; grid-template-columns: 657px 605px 1fr; background: #202020; color: #fff; font-size: 15px; line-height: 20px; }
.weather { display: flex; align-items: center; gap: 9px; padding-left: 25px; letter-spacing: -.33px; }
.weather svg { margin-top: -4px; }
.weather span { color: #c8c8c8; }
.weather div { padding-bottom: 1px; }
.apps { display: grid; grid-template-columns: repeat(11, 55px); }
.apps div { position: relative; display: flex; align-items: center; justify-content: center; }
.apps svg { position: relative; width: 30px; height: 30px; overflow: visible; }
.run::after { content: ""; position: absolute; bottom: 6px; width: 8px; height: 4px; border-radius: 2px; background: #999; }
.active::before { content: ""; position: absolute; left: 3px; top: 5px; width: 49px; height: 50px; border-radius: 5px; background: #2d2d2d; border: 1px solid #363636; }
.active::after { content: ""; position: absolute; bottom: 6px; width: 20px; height: 4px; border-radius: 2px; background: #4cc2ff; }
.tray { display: grid; grid-template-columns: 31px 37px 50px 30px 30px 30px 84px 20px; align-items: center; padding-left: 310px; letter-spacing: -.55px; }
.temp { color: #ffd21a; font-size: 12.5px; letter-spacing: 0; margin-top: -1px; margin-left: -1px; }
.lang { justify-self: start; width: 28px; margin-left: -1px; text-align: center; letter-spacing: -.85px; }
.lang, .clock { margin-top: -2px; }
.clock { text-align: right; padding-right: 1px; }
.time { letter-spacing: -1.3px; }
.badge { width: 20px; height: 20px; margin-left: 10px; border-radius: 50%; background: #4cc2ff; color: #111; text-align: center; font-size: 13.5px; letter-spacing: 0; }
```
